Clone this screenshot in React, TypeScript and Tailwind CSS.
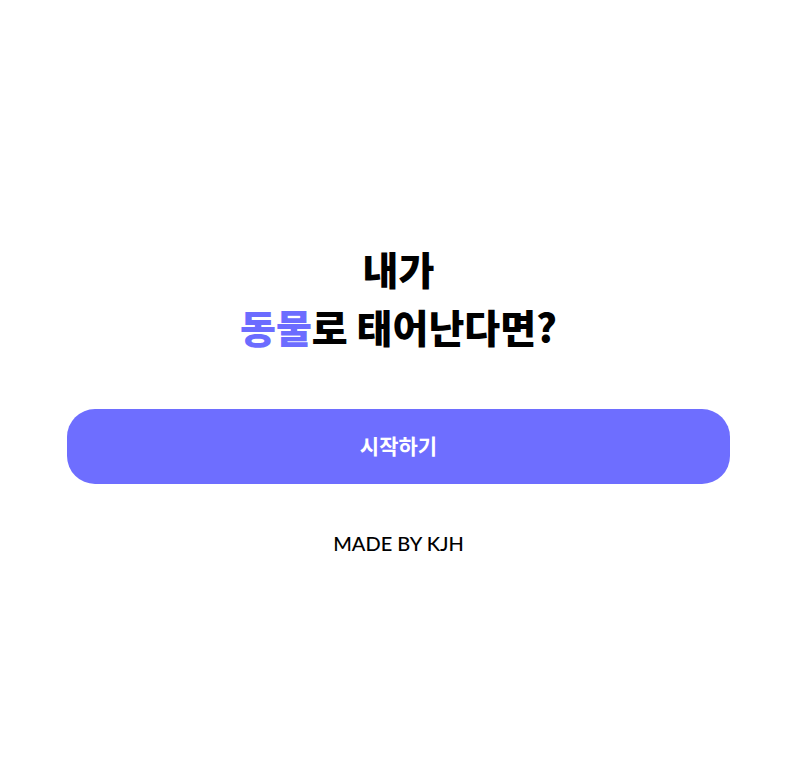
export default function App() {
  return (
    <div className="min-h-screen bg-white flex flex-col items-center justify-center px-[67px] font-['Noto_Sans_CJK_KR',sans-serif]">
      <div className="flex flex-col items-center pt-[18px]">
        <h1 className="text-[39px] leading-[58px] font-black text-black text-center">
          내가
          <br />
          <span className="text-[#6c6cff]">동물</span>로 태어난다면?
        </h1>
      </div>
      <button className="mt-[54px] w-full h-[75px] rounded-[28px] bg-[#6e6eff] text-white text-[21px] font-bold">
        시작하기
      </button>
      <p className="mt-[44px] text-[20px] font-medium text-black font-['Lato','Noto_Sans_CJK_KR',sans-serif]">MADE BY KJH</p>
    </div>
  );
}
